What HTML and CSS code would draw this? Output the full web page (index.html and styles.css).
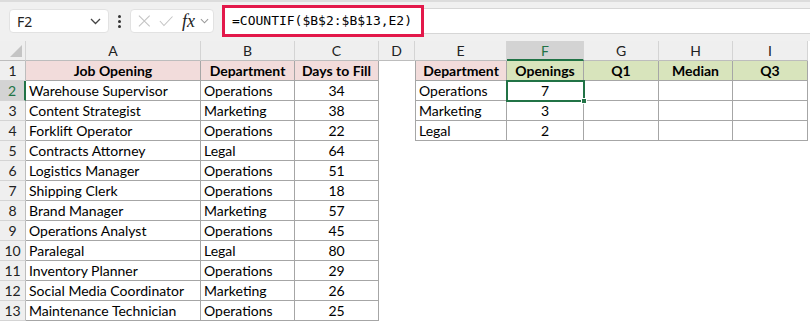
FILE: index.html
```html
<!DOCTYPE html>
<html lang="en">
<head>
  <meta charset="UTF-8">
  <title>COUNTIF Openings</title>
  <link rel="stylesheet" href="styles.css">
</head>
<body>
  <div class="toolbar">
    <div class="namebox">
      <span>F2</span>
      <svg width="11" height="7" viewBox="0 0 11 7"><path d="M1 1l4.5 4.5L10 1" fill="none" stroke="#444" stroke-width="1.3"/></svg>
    </div>
    <div class="dots"><i></i><i></i><i></i></div>
    <div class="fxbox">
      <svg width="14" height="14" viewBox="0 0 14 14"><path d="M1 1l12 12M13 1L1 13" stroke="#c4c4c4" stroke-width="1.2"/></svg>
      <svg width="16" height="12" viewBox="0 0 16 12"><path d="M1 6l4.5 5L15 1" fill="none" stroke="#c4c4c4" stroke-width="1.2"/></svg>
      <span class="fx">fx</span>
      <svg width="10" height="6" viewBox="0 0 10 6"><path d="M1 1l4 4 4-4" fill="none" stroke="#999" stroke-width="1.2"/></svg>
    </div>
    <div class="formula">
      <span class="formula-text">=COUNTIF($B$2:$B$13,E2)</span>
    </div>
  </div>

  <div class="sheet">
    <div class="hd corner"><span class="tri"></span></div>
    <div class="hd">A</div><div class="hd">B</div><div class="hd">C</div><div class="hd">D</div>
    <div class="hd">E</div><div class="hd active-col">F</div><div class="hd">G</div><div class="hd">H</div><div class="hd">I</div>

    <div class="rh">1</div>
    <div class="c t pk b ctr">Job Opening</div><div class="c t pk b ctr">Department</div><div class="c t pk b ctr">Days to Fill</div>
    <div class="c"></div>
    <div class="c t bl pk b ctr">Department</div><div class="c t gr b ctr">Openings</div><div class="c t gr b ctr">Q1</div><div class="c t gr b ctr">Median</div><div class="c t gr b ctr">Q3</div>

    <div class="rh active-row">2</div>
    <div class="c t">Warehouse Supervisor</div><div class="c t">Operations</div><div class="c t ctr">34</div>
    <div class="c"></div>
    <div class="c t bl">Operations</div><div class="c t ctr selected">7<span class="handle"></span></div><div class="c t"></div><div class="c t"></div><div class="c t"></div>

    <div class="rh">3</div>
    <div class="c t">Content Strategist</div><div class="c t">Marketing</div><div class="c t ctr">38</div>
    <div class="c"></div>
    <div class="c t bl">Marketing</div><div class="c t ctr">3</div><div class="c t"></div><div class="c t"></div><div class="c t"></div>

    <div class="rh">4</div>
    <div class="c t">Forklift Operator</div><div class="c t">Operations</div><div class="c t ctr">22</div>
    <div class="c"></div>
    <div class="c t bl">Legal</div><div class="c t ctr">2</div><div class="c t"></div><div class="c t"></div><div class="c t"></div>

    <div class="rh">5</div>
    <div class="c t">Contracts Attorney</div><div class="c t">Legal</div><div class="c t ctr">64</div>
    <div class="c rest"></div>

    <div class="rh">6</div>
    <div class="c t">Logistics Manager</div><div class="c t">Operations</div><div class="c t ctr">51</div>
    <div class="c rest"></div>

    <div class="rh">7</div>
    <div class="c t">Shipping Clerk</div><div class="c t">Operations</div><div class="c t ctr">18</div>
    <div class="c rest"></div>

    <div class="rh">8</div>
    <div class="c t">Brand Manager</div><div class="c t">Marketing</div><div class="c t ctr">57</div>
    <div class="c rest"></div>

    <div class="rh">9</div>
    <div class="c t">Operations Analyst</div><div class="c t">Operations</div><div class="c t ctr">45</div>
    <div class="c rest"></div>

    <div class="rh">10</div>
    <div class="c t">Paralegal</div><div class="c t">Legal</div><div class="c t ctr">80</div>
    <div class="c rest"></div>

    <div class="rh">11</div>
    <div class="c t">Inventory Planner</div><div class="c t">Operations</div><div class="c t ctr">29</div>
    <div class="c rest"></div>

    <div class="rh">12</div>
    <div class="c t">Social Media Coordinator</div><div class="c t">Marketing</div><div class="c t ctr">26</div>
    <div class="c rest"></div>

    <div class="rh">13</div>
    <div class="c t">Maintenance Technician</div><div class="c t">Operations</div><div class="c t ctr">25</div>
    <div class="c rest"></div>
  </div>
</body>
</html>
```

FILE: styles.css
```css
* {
  box-sizing: border-box;
}

body {
  margin: 0;
  width: 810px;
  height: 322px;
  overflow: hidden;
  background: #ffffff;
  font-family: Lato, "Liberation Sans", sans-serif;
  color: #000;
}

/* formula bar */
.toolbar {
  height: 41px;
  background: #f0f0f0;
  border-top: 2px solid #dcdcdc;
  display: flex;
  align-items: flex-start;
  padding-top: 7px;
}

.namebox {
  margin-left: 9px;
  width: 100px;
  height: 24px;
  background: #fff;
  border: 1px solid #e2e2e2;
  border-radius: 4px;
  display: flex;
  align-items: center;
  justify-content: space-between;
  padding: 0 7px 0 7px;
  font-family: "Noto Sans", sans-serif;
  font-size: 14px;
  color: #222;
}

.dots {
  width: 21px;
  height: 24px;
  display: flex;
  flex-direction: column;
  align-items: center;
  justify-content: center;
  gap: 2px;
}

.dots i {
  width: 3px;
  height: 3px;
  background: #333;
  border-radius: 50%;
}

.fxbox {
  width: 84px;
  height: 24px;
  background: #fff;
  border: 1px solid #e2e2e2;
  border-radius: 4px;
  display: flex;
  align-items: center;
  padding: 0 4px 0 7px;
  gap: 8px;
}

.fxbox .fx {
  font-family: "Liberation Serif", serif;
  font-style: italic;
  font-size: 18px;
  color: #222;
  margin-left: 1px;
  margin-right: -3px;
  line-height: 1;
}

.formula {
  margin-left: 8px;
  flex: 1;
  height: 26px;
  margin-top: -1px;
  background: #fff;
  border-top: 1px solid #d6d6d6;
  border-bottom: 1px solid #d6d6d6;
}

.formula-text {
  display: inline-block;
  margin-top: -5px;
  height: 32px;
  width: 202px;
  border: 3px solid #e3184a;
  background: #fff;
  padding-left: 7px;
  font-family: "DejaVu Sans Mono", monospace;
  font-size: 13px;
  line-height: 26px;
  color: #000;
}

/* sheet grid */
.sheet {
  display: grid;
  grid-template-columns: 26px 175px 94px 84px 36px 92px 77px 75px 74px 75px;
  grid-auto-rows: 20px;
  font-size: 14px;
  line-height: 19px;
}

.hd {
  background: #efefef;
  border-right: 1px solid #d4d4d4;
  border-bottom: 1px solid #bdbdbd;
  text-align: center;
  color: #222;
}

.corner {
  position: relative;
}

.corner .tri {
  position: absolute;
  right: 3px;
  bottom: 3px;
  width: 0;
  height: 0;
  border-left: 12px solid transparent;
  border-bottom: 12px solid #c4c4c4;
}

.active-col {
  background: #d3d3d3;
  color: #217346;
  border-bottom: 2px solid #217346;
}

.rh {
  background: #efefef;
  border-right: 1px solid #bdbdbd;
  border-bottom: 1px solid #d4d4d4;
  text-align: center;
  color: #222;
}

.active-row {
  background: #d3d3d3;
  color: #217346;
  border-right: 2px solid #217346;
}

.c {
  padding: 0 3px;
  white-space: nowrap;
  overflow: visible;
}

.t {
  border-right: 1px solid #a6a6a6;
  border-bottom: 1px solid #a6a6a6;
}

.bl {
  border-left: 1px solid #a6a6a6;
}

.rest {
  grid-column: span 6;
}

.pk {
  background: #f2dcdb;
}

.gr {
  background: #d8e4bc;
}

.b {
  font-weight: bold;
}

.ctr {
  text-align: center;
}

.selected {
  position: relative;
  outline: 2px solid #217346;
  outline-offset: -1px;
}

.selected .handle {
  position: absolute;
  right: -4px;
  bottom: -4px;
  width: 6px;
  height: 6px;
  background: #217346;
  border: 1px solid #fff;
}
```
